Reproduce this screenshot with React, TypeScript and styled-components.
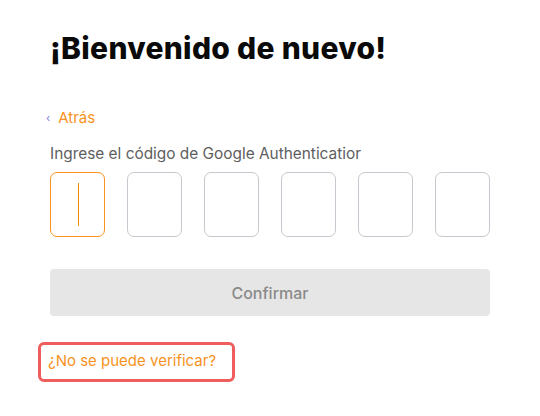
import React from "react";
import styled, { createGlobalStyle } from "styled-components";

const Global = createGlobalStyle`
  html, body { margin: 0; padding: 0; background: #ffffff; }
  body { font-family: "Inter", "Liberation Sans", sans-serif; }
`;

const Page = styled.div`
  width: 540px;
  height: 416px;
  box-sizing: border-box;
  padding: 28px 50px 0 50px;
  display: flex;
  flex-direction: column;
`;

const Title = styled.h1`
  margin: 0;
  font-family: "Inter", "Liberation Sans", sans-serif;
  font-weight: 800;
  font-size: 30px;
  line-height: 40px;
  color: #0a0a0a;
  letter-spacing: 0.3px;
`;

const BackLink = styled.a`
  margin-top: 40px;
  display: flex;
  align-items: center;
  gap: 8px;
  margin-left: -4px;
  color: #f7931e;
  font-size: 15px;
  line-height: 20px;
  text-decoration: none;
  cursor: pointer;
`;

const Chevron = styled.span`
  color: #7b82e0;
  font-size: 11px;
  line-height: 20px;
`;

const Label = styled.div`
  margin-top: 16px;
  font-size: 15.4px;
  line-height: 20px;
  color: #5e5e5e;
`;

const CodeRow = styled.div`
  margin-top: 8px;
  display: flex;
  justify-content: space-between;
  width: 440px;
`;

const CodeBox = styled.div<{ $active?: boolean }>`
  box-sizing: border-box;
  width: 55px;
  height: 65px;
  border: 1px solid ${(p) => (p.$active ? "#f7931e" : "#c9c8d0")};
  border-radius: 7px;
  display: flex;
  align-items: center;
  padding-left: 27px;
`;

const Caret = styled.div`
  width: 1px;
  height: 43px;
  background: #f58a07;
`;

const ConfirmButton = styled.button`
  margin-top: 32px;
  width: 440px;
  height: 47px;
  border: none;
  border-radius: 4px;
  background: #e6e6e6;
  color: #8a8a8a;
  font-family: "Inter", "Liberation Sans", sans-serif;
  font-size: 16px;
  font-weight: 500;
`;

const HelpWrap = styled.div`
  margin-top: 26px;
  margin-left: -12px;
  align-self: flex-start;
  border: 3px solid #f05d5d;
  border-radius: 6px;
  padding: 5px 16px 7px 7px;
`;

const HelpLink = styled.a`
  color: #f7931e;
  font-size: 15px;
  line-height: 22px;
  text-decoration: none;
`;

export default function App() {
  return (
    <>
      <Global />
      <Page>
        <Title>¡Bienvenido de nuevo!</Title>
        <BackLink>
          <Chevron>‹</Chevron>
          Atrás
        </BackLink>
        <Label>Ingrese el código de Google Authenticatior</Label>
        <CodeRow>
          {[0, 1, 2, 3, 4, 5].map((i) => (
            <CodeBox key={i} $active={i === 0}>
              {i === 0 && <Caret />}
            </CodeBox>
          ))}
        </CodeRow>
        <ConfirmButton>Confirmar</ConfirmButton>
        <HelpWrap>
          <HelpLink>¿No se puede verificar?</HelpLink>
        </HelpWrap>
      </Page>
    </>
  );
}
